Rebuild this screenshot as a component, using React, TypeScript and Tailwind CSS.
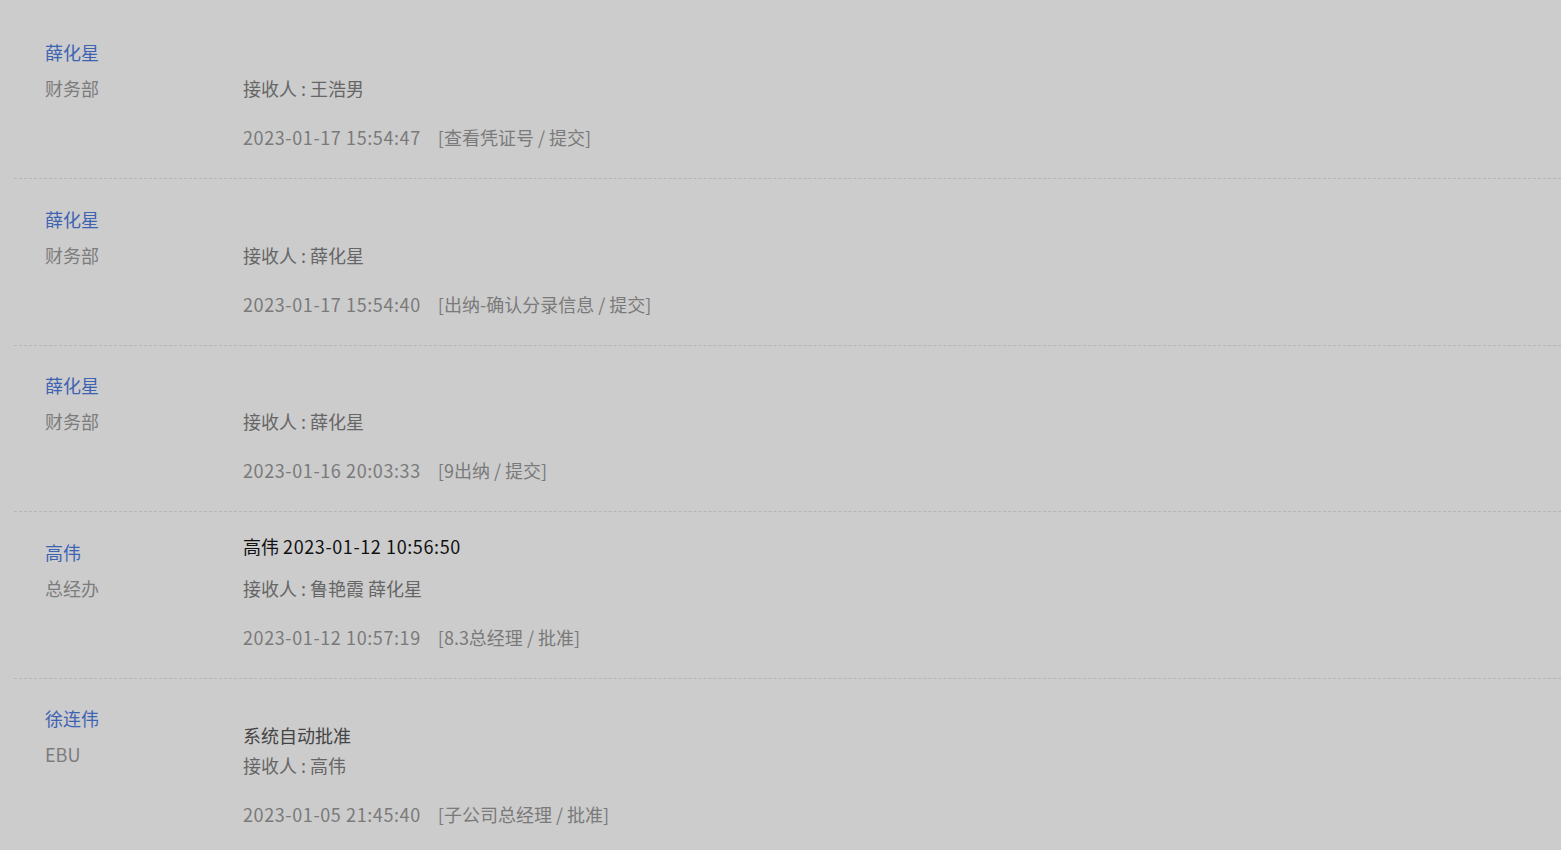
import React from "react";

type Entry = {
  name: string;
  dept: string;
  title?: string;
  comment?: string;
  receiver: string;
  time: string;
  step: string;
};

const entries: Entry[] = [
  { name: "薛化星", dept: "财务部", receiver: "王浩男", time: "2023-01-17 15:54:47", step: "查看凭证号 / 提交" },
  { name: "薛化星", dept: "财务部", receiver: "薛化星", time: "2023-01-17 15:54:40", step: "出纳-确认分录信息 / 提交" },
  { name: "薛化星", dept: "财务部", receiver: "薛化星", time: "2023-01-16 20:03:33", step: "9出纳 / 提交" },
  {
    name: "高伟",
    dept: "总经办",
    title: "2023-01-12 10:56:50",
    receiver: "鲁艳霞 薛化星",
    time: "2023-01-12 10:57:19",
    step: "8.3总经理 / 批准",
  },
  {
    name: "徐连伟",
    dept: "EBU",
    comment: "系统自动批准",
    receiver: "高伟",
    time: "2023-01-05 21:45:40",
    step: "子公司总经理 / 批准",
  },
];

export default function App() {
  return (
    <div
      className="min-h-[850px] bg-[#cccccc] pt-[12.5px] pl-[14px] text-[18px]"
      style={{ fontFamily: '"Noto Sans CJK SC", "Noto Sans", sans-serif' }}
    >
      {entries.map((e, i) => (
        <div
          key={i}
          className={
            e.comment
              ? "flex h-[178px] border-b border-dashed border-[#b5b5b5] pl-[31px]"
              : "flex h-[166.5px] border-b border-dashed border-[#b5b5b5] pl-[31px]"
          }
        >
          {/* Left: person */}
          <div className="w-[198px] shrink-0 pt-[21.5px] leading-[36px]">
            <div className="text-[#3e63b3]">{e.name}</div>
            <div className="text-[#7c7c7c]">{e.dept}</div>
          </div>

          {/* Right: detail */}
          {e.comment ? (
            <div className="pt-[41.5px] leading-[30px]">
              <div className="text-[#444444]">{e.comment}</div>
              <div className="text-[#666666]">接收人 : {e.receiver}</div>
              <div className="mt-[13px] leading-[42px] text-[#7a7a7a]">
                <span className="tracking-[0.6px]">{e.time}</span>
                <span className="ml-[17px]">[{e.step}]</span>
              </div>
            </div>
          ) : (
            <div className="pt-[12.5px] leading-[42px]">
              <div className="h-[42px] text-[#111111]">
                {e.title && (
                  <>
                    {e.name} <span className="tracking-[0.6px]">{e.title}</span>
                  </>
                )}
              </div>
              <div className="text-[#666666]">接收人 : {e.receiver}</div>
              <div className="mt-[7px] text-[#7a7a7a]">
                <span className="tracking-[0.6px]">{e.time}</span>
                <span className="ml-[17px]">[{e.step}]</span>
              </div>
            </div>
          )}
        </div>
      ))}
    </div>
  );
}
